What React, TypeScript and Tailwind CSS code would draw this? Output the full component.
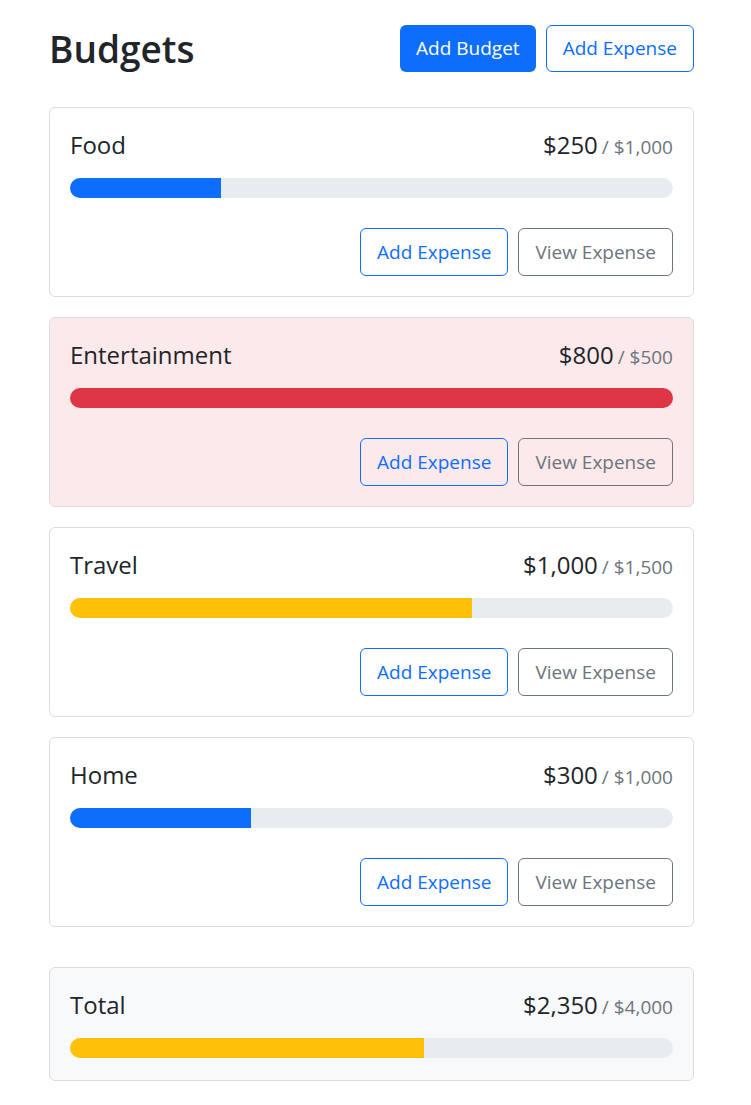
type Budget = {
  name: string;
  amount: number;
  max: number;
};

const budgets: Budget[] = [
  { name: "Food", amount: 250, max: 1000 },
  { name: "Entertainment", amount: 800, max: 500 },
  { name: "Travel", amount: 1000, max: 1500 },
  { name: "Home", amount: 300, max: 1000 },
];

const fmt = (n: number) => "$" + n.toLocaleString("en-US");

function barColor(ratio: number) {
  if (ratio < 0.5) return "bg-[#0d6efd]";
  if (ratio < 0.75) return "bg-[#ffc107]";
  return "bg-[#dc3545]";
}

function BudgetCard({
  name,
  amount,
  max,
  gray,
  hideButtons,
}: Budget & { gray?: boolean; hideButtons?: boolean }) {
  const ratio = amount / max;
  const over = amount > max;
  let bg = "bg-white";
  if (over) bg = "bg-[#fce9eb]";
  else if (gray) bg = "bg-[#f8f9fa]";

  return (
    <div
      className={`rounded-md border border-[#dcdddf] ${bg} px-5 pt-5 ${
        hideButtons ? "pb-[22px]" : "pb-5"
      }`}
    >
      <div className="flex h-[30px] items-baseline justify-between pt-[2px]">
        <div className="text-[24px] leading-[30px] text-[#212529]">{name}</div>
        <div className="text-[24px] leading-[30px] text-[#212529]">
          {fmt(amount)}
          <span className="ml-1 text-[19px] text-[#6c757d]">/ {fmt(max)}</span>
        </div>
      </div>
      <div className="mt-[20px] h-5 w-full overflow-hidden rounded-full bg-[#e9ecef]">
        <div
          className={`h-full ${barColor(ratio)}`}
          style={{ width: `${Math.min(ratio, 1) * 100}%` }}
        />
      </div>
      {!hideButtons && (
        <div className="mt-[30px] flex justify-end gap-[10px]">
          <button className="h-12 rounded-md border border-[#0d6efd] px-4 text-[19px] text-[#0d6efd]">
            Add Expense
          </button>
          <button className="h-12 rounded-md border border-[#6c757d] px-4 text-[19px] text-[#6c757d]">
            View Expense
          </button>
        </div>
      )}
    </div>
  );
}

export default function App() {
  const total = budgets.reduce((s, b) => s + b.amount, 0);
  const totalMax = budgets.reduce((s, b) => s + b.max, 0);

  return (
    <div
      className="min-h-screen bg-white"
      style={{ fontFamily: '"Open Sans", "Noto Sans", sans-serif' }}
    >
      <div className="mx-[49px] w-[645px] pt-[25px]">
        <div className="mb-[35px] flex items-center gap-[10px]">
          <h1 className="mr-auto text-[37px] font-semibold leading-[47px] text-[#212529]">
            Budgets
          </h1>
          <button className="h-[47px] rounded-md bg-[#0d6efd] px-4 text-[19px] text-white">
            Add Budget
          </button>
          <button className="h-[47px] rounded-md border border-[#0d6efd] px-4 text-[19px] text-[#0d6efd]">
            Add Expense
          </button>
        </div>
        <div className="flex flex-col gap-5">
          {budgets.map((b) => (
            <BudgetCard key={b.name} {...b} />
          ))}
        </div>
        <div className="mt-10">
          <BudgetCard name="Total" amount={total} max={totalMax} gray hideButtons />
        </div>
      </div>
    </div>
  );
}
